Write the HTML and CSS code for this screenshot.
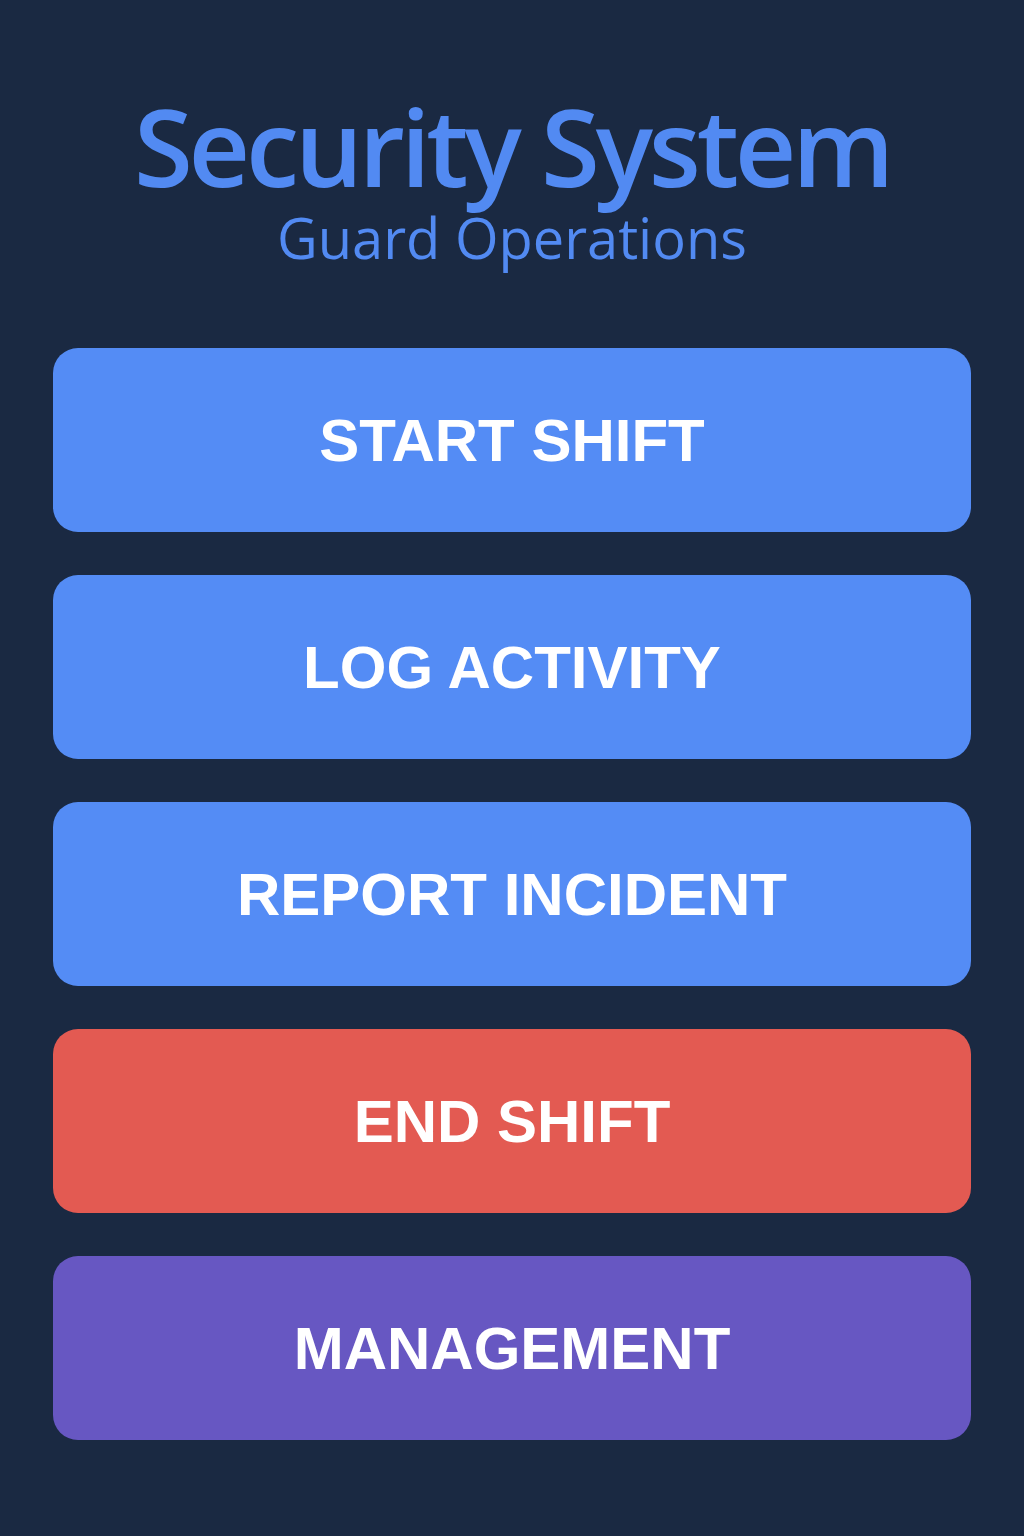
FILE: index.html
```html
<!DOCTYPE html>
<html lang="en">
  <head>
    <meta charset="UTF-8" />
    <meta name="viewport" content="width=device-width, initial-scale=1.0" />
    <title>Security System</title>
    <link rel="stylesheet" href="styles.css">
  </head>
  <body>
    <main class="app">
      <header class="app-head">
        <h1 class="app-title">Security System</h1>
        <p class="app-sub">Guard Operations</p>
      </header>

      <nav class="menu">
        <button class="menu-btn">START SHIFT</button>
        <button class="menu-btn">LOG ACTIVITY</button>
        <button class="menu-btn">REPORT INCIDENT</button>
        <button class="menu-btn danger">END SHIFT</button>
        <button class="menu-btn admin">MANAGEMENT</button>
      </nav>
    </main>
  </body>
</html>
```

FILE: styles.css
```css
@charset 'utf-8';
* {
  margin: 0;
  padding: 0;
  box-sizing: border-box;
}

html,
body {
  background: #1a2942;
  min-height: 100%;
}

.app {
  padding: 98px 53px 0;
  min-height: 1536px;
}

.app-head {
  text-align: center;
  color: #528af2;
  font-family: "Open Sans", "Noto Sans", sans-serif;
}
.app-title {
  font-size: 107px;
  font-weight: 600;
  line-height: 0.9;
  letter-spacing: -4.2px;
}
.app-sub {
  margin-top: 15px;
  font-size: 56px;
  font-weight: 400;
  line-height: 1;
}

.menu {
  margin-top: 83px;
  display: flex;
  flex-direction: column;
  gap: 43px;
}
.menu-btn {
  height: 184px;
  border: 0;
  border-radius: 25px;
  background: #548cf5;
  color: #fff;
  font-family: "Liberation Sans", Arial, sans-serif;
  font-weight: 700;
  font-size: 60px;
  cursor: pointer;
}
.menu-btn.danger {
  background: #e35a52;
}
.menu-btn.admin {
  background: #6757c2;
}
```
